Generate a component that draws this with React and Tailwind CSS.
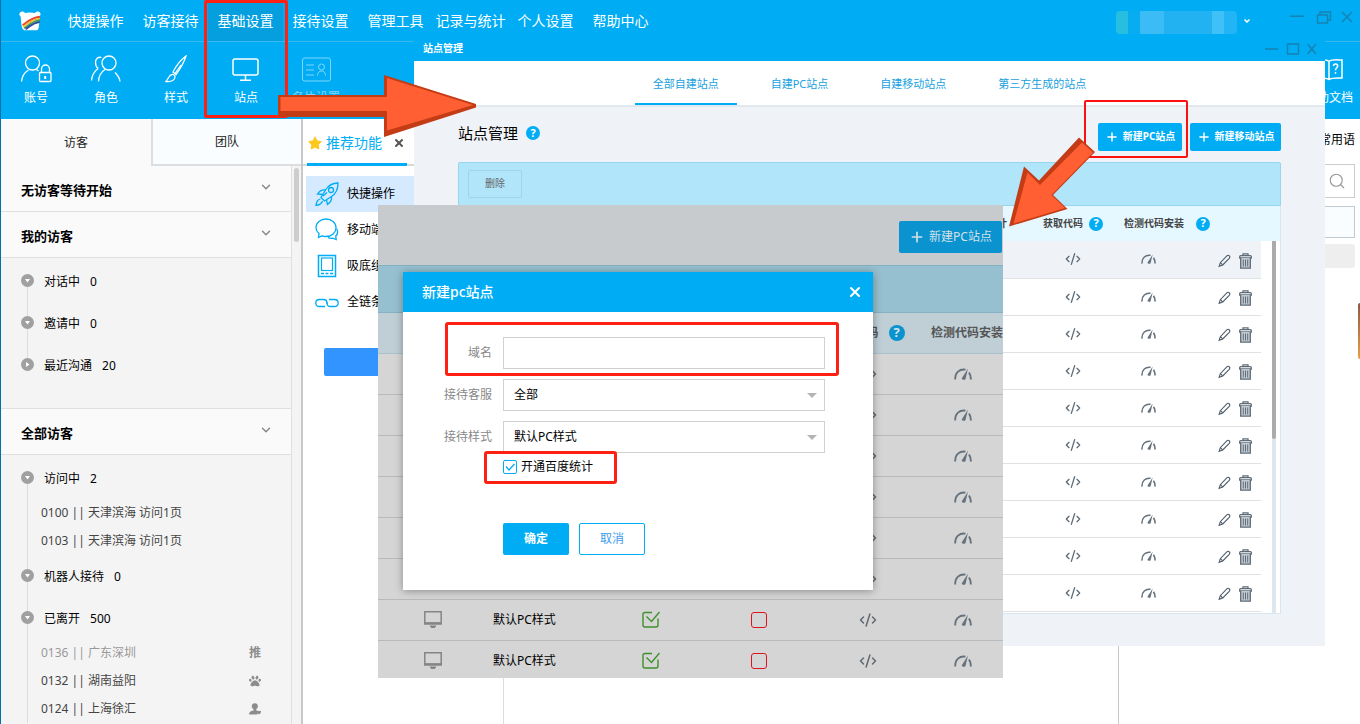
import React, { useState } from "react";
import { CodeXml, Plus, Search, X, ChevronDown } from "lucide-react";
import { FaPaw, FaStar } from "react-icons/fa";

const navItems = [
  "快捷操作",
  "访客接待",
  "基础设置",
  "接待设置",
  "管理工具",
  "记录与统计",
  "个人设置",
  "帮助中心",
];

const siteTabs = ["全部自建站点", "自建PC站点", "自建移动站点", "第三方生成的站点"];

const myGroups = [
  { name: "对话中", count: 0, open: true },
  { name: "邀请中", count: 0, open: true },
  { name: "最近沟通", count: 20, open: false },
];

const allGroups = [
  {
    name: "访问中",
    count: 2,
    open: true,
    visitors: [
      { label: "0100 || 天津滨海 访问1页" },
      { label: "0103 || 天津滨海 访问1页" },
    ],
  },
  { name: "机器人接待", count: 0, open: true },
  {
    name: "已离开",
    count: 500,
    open: true,
    visitors: [
      { label: "0136 || 广东深圳", muted: true, mark: "push" },
      { label: "0132 || 湖南益阳", mark: "baidu" },
      { label: "0124 || 上海徐汇", mark: "user" },
    ],
  },
];

const siteStyles = ["", "", "", "", "", "", "默认PC样式", "默认PC样式"];

// ---------- Icons ----------

const Logo = () => (
  <svg className="w-[22px] h-5" viewBox="0 0 22 20" aria-hidden="true">
    <path
      d="M1 1.500C2.500 0 5 .3 6 2c3-.8 7-.8 10 0 1-1.700 3.500-2 5-.5.9 1.200.6 2.800-.4 3.700.3 3-.4 7-.6 9.300-.2 2.500-.8 4.500-2 4.800H5.500c-1.800-.8-2.800-3-3-5.300C2.200 11 1.800 8 1.700 5.600.2 4.800 0 2.800 1 1.500z"
      fill="#fff"
    />
    <path d="M3.500 14C7.500 12.500 9 7.500 21 5.800" stroke="#e8442c" strokeWidth="2" fill="none" />
    <path d="M4 15.500C8 14 9.500 9.500 21 7.500" stroke="#f6b51f" strokeWidth="1.500" fill="none" />
    <path d="M5 17C9 15.500 10.500 11 21 9" stroke="#3f9f4a" strokeWidth="1.500" fill="none" />
    <path d="M6.500 18C10 16.500 11.500 12.500 20.800 10.700" stroke="#2c4fa8" strokeWidth="2" fill="none" />
  </svg>
);

const AccountIcon = () => (
  <svg className="w-8 h-7" viewBox="0 0 32 28" fill="none" stroke="#fff" strokeWidth="1.300">
    <circle cx="12.500" cy="8" r="7" />
    <path d="M1.500 26.500c.5-5 3-9 7-11.500M16.500 14.500l2 1.500" />
    <path d="M21.500 17v-3a4 4 0 0 1 8 0v3" />
    <rect x="19.500" y="17.500" width="11.500" height="9" rx="1" />
    <path d="M25.200 21v3" strokeWidth="2" />
  </svg>
);

const RoleIcon = () => (
  <svg className="w-8 h-7" viewBox="0 0 32 28" fill="none" stroke="#fff" strokeWidth="1.300">
    <circle cx="19" cy="8" r="7" />
    <path d="M8.500 26.500c.3-5 2.500-9.500 6.500-12M25 17.500c2.500 2.500 4.700 5.500 5 9" />
    <path d="M11.500 2.500C8 1.500 5.500 4 5.500 7.500c0 2.700 1 4.600 2.700 6M8.200 13.500C4.500 16 2 20 1.500 25.500" />
  </svg>
);

const BrushIcon = () => (
  <svg className="w-8 h-7" viewBox="0 0 32 28" fill="none" stroke="#fff" strokeWidth="1.300">
    <path d="M26 1C22 4 16 11 13 17l3 2.500C20 14 24.500 6 26 1zM13 17l3 2.500" />
    <path d="M12 19.500c-3 .3-3 3.500-6 7 4 .3 8.500 0 9-4.500.2-1.500-1.500-2.700-3-2.500z" />
    <path d="M15 18.500 21 10" />
  </svg>
);

const ScreenIcon = () => (
  <svg className="w-8 h-7" viewBox="0 0 32 28" fill="none" stroke="#fff" strokeWidth="1.500">
    <rect x="3" y="4" width="25" height="16" rx="2" />
    <path d="M15.500 20v5M10 25.200h11" />
  </svg>
);

const CardIcon = () => (
  <svg className="w-8 h-7" viewBox="0 0 32 28" fill="none" stroke="#fff" strokeWidth="1">
    <rect x="2.500" y="3" width="28" height="23" rx="2" />
    <path d="M6 10h8M6 15h8M6 20h8" />
    <circle cx="21.500" cy="12" r="3" />
    <path d="M17.500 20.500c0-6 8-6 8 0" />
  </svg>
);

const DocIcon = () => (
  <svg className="w-8 h-7" viewBox="0 0 32 28" fill="none" stroke="#fff" strokeWidth="1.500">
    <path d="M16 6.500C13 4 8 5 3 5v18c5 0 10-.5 13 1.500 3-2 8-1.500 13-1.500V5c-5 0-10-1-13 1.500zM16 6v18M6 9h6M6 14h6M6 19h6" />
    <path d="M20.500 11c0-3 4.500-2.500 4.200.2-.2 1.500-2.200 1.800-2.200 4M22.500 17v1.800" />
  </svg>
);

const RocketIcon = () => (
  <svg className="w-6 h-6" viewBox="0 0 24 24" fill="none" stroke="#00adf5" strokeWidth="1.300">
    <path d="M23 1c-6 0-10 3-12.500 7L6 15.500 9.500 19l7-4.500C20.500 12 23 7 23 1z" />
    <path d="M10.500 8C7 7.500 4.500 9 2.500 12l5 .5M16.500 14.500c.5 3.500-1 6-4 8l-1-4.500" />
    <circle cx="16" cy="8" r="2.500" />
    <path d="M5.500 17C2 18 1.500 20 1 23.500 4.500 23 6.500 22 7.500 19M8 14l4-3.500" />
  </svg>
);

const ChatIcon = () => (
  <svg className="w-6 h-6" viewBox="0 0 24 24" fill="none" stroke="#00adf5" strokeWidth="1.300">
    <path d="M11 1c5.500 0 10 3.800 10 8.800 0 4.800-4 8.700-10 8.700-1.500 0-3-.3-4-.7L3.500 19.500 4 15.500C2.200 14 1 12 1 9.800 1 4.800 5.500 1 11 1z" />
    <path d="M21.500 10.500c1.500 2.500 1.500 5.500-.8 7.500l.5 3.500-3.500-1.300c-1.700.3-3.200.2-4.700-.5" />
  </svg>
);

const PhoneIcon = () => (
  <svg className="w-6 h-6" viewBox="0 0 24 24" fill="none" stroke="#00adf5" strokeWidth="1.500">
    <rect x="3.500" y="1.500" width="17" height="21" />
    <rect x="6.500" y="4" width="11" height="12.500" strokeWidth="1.200" />
    <path d="M6 19.500h3M10.500 19.500h3M15 19.500h3" />
  </svg>
);

const LinkIcon = () => (
  <svg className="w-6 h-6" viewBox="0 0 24 24" fill="none" stroke="#00adf5" strokeWidth="1.300">
    <path d="M10 16.500H4.500C2 16.500.8 15.500.8 13S2 9.500 4.500 9.500h4c3 0 3.500 1.500 3.500 3.500v1" />
    <path d="M14 9.500h5.500c2.500 0 3.700 1 3.700 3.500s-1.200 3.500-3.700 3.500h-4c-3 0-3.500-1.500-3.500-3.500v-1" />
  </svg>
);

const GaugeIcon = ({ large }) => (
  <svg
    className={large ? "w-[18px] h-3" : "w-[15px] h-[10px]"}
    viewBox="0 0 18 12"
    fill="none"
    stroke="#66727d"
    strokeWidth="1.800"
  >
    <path d="M1.200 11.500C.8 4.500 5.500.8 11.500 1.600" />
    <path d="M15 4.500c1.300 1.800 1.900 4 1.900 7" strokeWidth="2" />
    <path d="M14 .5 11.500 11c-.5 1.200-3.300 1.200-3.800-.5z" fill="#66727d" stroke="none" />
  </svg>
);

const PencilIcon = () => (
  <svg className="w-[13px] h-[14px]" viewBox="0 0 14 14" fill="none" stroke="#4f5c69" strokeWidth="1.200">
    <path d="M1.200 12.800 2.500 8.800 9.500 1.500c.9-.9 2-.8 2.700 0s.7 1.700-.1 2.600l-7 7.200z" />
    <path d="M2.500 8.800 5 11.200" />
  </svg>
);

const TrashIcon = () => (
  <svg className="w-[13px] h-4" viewBox="0 0 13 16" fill="none" stroke="#5f6c78" strokeWidth="1.300">
    <path d="M4 2.500V.8h5v1.700M.7 5V3.600c0-.6.5-1 1-1h9.600c.5 0 1 .4 1 1V5z" />
    <path d="M1.700 5v10.200h9.600V5" fill="#c3cbd2" />
    <path d="M4.300 6.500v7M6.500 6.500v7M8.700 6.500v7" strokeWidth="1" />
  </svg>
);

const MonitorIcon = () => (
  <svg className="w-[18px] h-[17px]" viewBox="0 0 18 17" fill="none" stroke="#858585">
    <path d="M.8.8h16.400v11.500H.8z" strokeWidth="1.500" />
    <path d="M0 12.500h18" strokeWidth="2.500" />
    <path d="M6 14.500h6v1.500H11v1H7v-1H6z" fill="#858585" stroke="none" />
  </svg>
);

const GreenCheck = () => (
  <svg className="w-[18px] h-[18px]" viewBox="0 0 18 18" fill="none" stroke="#3f8f2c" strokeWidth="1.400">
    <path d="M10 1.500H3c-1.500 0-2 .5-2 2V14c0 1.300.5 2 2 2h11c1.300 0 2-.7 2-2V7.500" />
    <path d="m4.500 5.500 5 5L17.500 1" />
  </svg>
);

const UserMark = () => (
  <svg className="w-3 h-3" viewBox="0 0 12 12" fill="#8c8c8c">
    <circle cx="5.800" cy="3.300" r="3" />
    <path d="M4.500 5h2.800v2.500c1.500.3 2 .8 2.200 1.500L8 11.500H0C0 9 1.500 8 4.500 7.500z" />
    <path d="M12 8.700c0 1.300-1.300 2.300-2 2.800-.7-.5-2-1.500-2-2.800 0-1 1.400-1.400 2-.3.600-1.100 2-.7 2 .3z" />
  </svg>
);

const Help = ({ large, dim }) => (
  <span
    className={`inline-flex items-center justify-center rounded-full font-bold ${
      large ? "w-4 h-4 text-[13px]" : "w-[14px] h-[14px] text-[11px]"
    } ${dim ? "bg-[#0b93d0] text-[#d5e4ea]" : "bg-[#00adf5] text-white"}`}
  >
    ?
  </span>
);

const markIcons = {
  push: <span className="text-xs font-bold text-[#8c8c8c]">推</span>,
  baidu: <FaPaw className="w-3 h-3 text-[#8c8c8c]" />,
  user: <UserMark />,
};

// ---------- Left column ----------

function SectionTitle({ children }) {
  return (
    <button className="flex w-full items-center justify-between h-[46px] pl-5 pr-[18px] bg-[#fafafa] border-b border-[#e0e0e0] text-[13px] font-bold text-black">
      <span className="pt-1">{children}</span>
      <ChevronDown className="w-[14px] h-[14px] mb-1 text-[#888]" strokeWidth={2.5} />
    </button>
  );
}

function Group({ group }) {
  return (
    <li>
      <div className="flex items-center h-10 pl-5">
        <svg className="w-[13px] h-[13px] mr-[10px] mb-1 shrink-0" viewBox="0 0 13 13">
          <circle cx="6.500" cy="6.500" r="6.500" fill="#a0a0a0" />
          {group.open ? (
            <path d="M4 5h5L6.500 8.500z" fill="#fff" />
          ) : (
            <path d="M5 4v5l3.500-2.500z" fill="#fff" />
          )}
        </svg>
        <span className="text-black">{group.name}</span>
        <span className="ml-[10px] text-black">{group.count}</span>
      </div>
      {group.visitors && (
        <ul>
          {group.visitors.map((visitor) => (
            <li
              key={visitor.label}
              className={`flex items-center justify-between h-7 pl-10 ${
                visitor.muted ? "text-[#999]" : "text-[#444]"
              }`}
            >
              <span>{visitor.label}</span>
              <span className="flex justify-center w-3 mr-[30px]">{markIcons[visitor.mark]}</span>
            </li>
          ))}
        </ul>
      )}
    </li>
  );
}

function VisitorColumn() {
  return (
    <aside className="flex flex-col w-[302px] shrink-0 bg-[#f5f4f5] border-r-2 border-[#c9c9c9]">
      <div className="grid grid-cols-2 h-[47px] shrink-0">
        <button className="bg-[#fafafa]">访客</button>
        <button className="bg-[#f9fdff] border-l-2 border-b-2 border-[#dcdfe2]">团队</button>
      </div>
      <div className="flex flex-1 min-h-0">
        <div className="flex-1 overflow-hidden border-r border-[#e0e0e0]">
          <SectionTitle>无访客等待开始</SectionTitle>
          <SectionTitle>我的访客</SectionTitle>
          <div className="relative h-[151px] pt-1 border-b border-[#e0e0e0]">
            <span className="absolute left-[26px] top-6 h-[84px] w-px bg-[#dcdcdc]"></span>
            <ul className="relative flex flex-col gap-[2px]">
              {myGroups.map((group) => (
                <Group key={group.name} group={group} />
              ))}
            </ul>
          </div>
          <SectionTitle>全部访客</SectionTitle>
          <div className="relative pt-1">
            <span className="absolute left-[26px] top-6 bottom-0 w-px bg-[#dcdcdc]"></span>
            <ul className="relative flex flex-col gap-[2px]">
              {allGroups.map((group) => (
                <Group key={group.name} group={group} />
              ))}
            </ul>
          </div>
        </div>
        <div className="w-[9px] pl-[2px] pt-[2px]">
          <div className="w-[5px] h-[74px] rounded-full bg-[#cdcdcd]"></div>
        </div>
      </div>
    </aside>
  );
}

function FeatureColumn() {
  const features = [
    { name: "快捷操作", icon: <RocketIcon />, active: true },
    { name: "移动端", icon: <ChatIcon /> },
    { name: "吸底组", icon: <PhoneIcon /> },
    { name: "全链条", icon: <LinkIcon /> },
  ];

  return (
    <section className="w-[201px] shrink-0 border-r border-[#dcdcdc]">
      <div className="flex h-[47px] pl-1 border-b-2 border-[#d8d8d8]">
        <div className="flex items-center gap-1 h-[47px] w-[100px] pt-1 pl-px border-b-[3px] border-[#00adf5]">
          <FaStar className="w-[14px] h-[14px] text-[#fdc81e]" />
          <span className="text-sm text-[#00adf5]">推荐功能</span>
          <X className="w-3 h-3 ml-[7px] text-[#555]" strokeWidth={4} />
        </div>
      </div>
      <ul className="mt-[10px] ml-[3px]">
        {features.map((item) => (
          <li
            key={item.name}
            className={`flex items-center gap-2 h-9 pl-[9px] text-black ${item.active ? "bg-[#d5e9ff]" : ""}`}
          >
            {item.icon}
            <span>{item.name}</span>
          </li>
        ))}
      </ul>
      <div className="mt-7 ml-[21px] h-7 rounded-[2px] bg-[#3194ff]"></div>
    </section>
  );
}

function PhraseColumn() {
  return (
    <section className="w-[242px] shrink-0 pr-[5px] border-l border-[#c9c9c9]">
      <div className="flex items-center justify-end h-[45px] pb-1 text-black">常用语</div>
      <div className="flex items-center justify-end h-[34px] pr-2 border border-[#ccc]">
        <Search className="w-[18px] h-[18px] text-[#999]" strokeWidth={1.5} />
      </div>
      <input
        aria-label="常用语"
        className="block w-full h-8 mt-2 border border-[#bfcad2] bg-[#f9fdff]"
      />
      <div className="h-6 mt-[6px] rounded-[3px] bg-[#eee]"></div>
    </section>
  );
}

// ---------- Header ----------

function Tool({ label, icon, faded }) {
  return (
    <button
      className={`flex flex-col items-center w-[70px] pt-[13px] text-xs text-white ${faded ? "opacity-50" : ""}`}
    >
      {icon}
      <span className="mt-[6px] h-[18px] leading-[18px]">{label}</span>
    </button>
  );
}

function Header() {
  return (
    <header className="bg-[#00adf5] text-white">
      <div className="flex items-center h-[42px] border-b border-[#38b9ee]">
        <div className="flex justify-center w-[57px]">
          <Logo />
        </div>
        <nav className="flex flex-1 h-full text-sm">
          {navItems.map((item) => (
            <a
              key={item}
              href="#"
              className={`flex items-center justify-center w-[75px] h-full whitespace-nowrap ${
                item === "基础设置" ? "bg-[#059edf]" : ""
              }`}
            >
              {item}
            </a>
          ))}
        </nav>
        <div className="flex h-[23px] w-[121px] mt-[3px] rounded overflow-hidden">
          <span className="w-3 bg-[#27bfe0]"></span>
          <span className="w-3 bg-[#08acf0]"></span>
          <span className="w-6 bg-[#3bbcf5]"></span>
          <span className="w-12 bg-[#22b2f2]"></span>
          <span className="w-3 bg-[#3fc0f6]"></span>
          <span className="flex-1 bg-[#22b4f4]"></span>
        </div>
        <ChevronDown className="w-2 h-2 ml-[6px] mr-[39px]" strokeWidth={5} />
        <div className="mr-[6px] -mt-2">
          <svg className="w-16 h-4" viewBox="0 0 64 16" fill="none" stroke="#1583b3" strokeWidth="1.500">
            <path d="M0 7.200h14M52 3l10 10M62 3 52 13" />
            <path d="M27.500 6h10v8h-10zM30 6V3h10.500v8H38" />
          </svg>
        </div>
      </div>
      <div className="flex justify-between h-[77px]">
        <div className="flex">
          <Tool label="账号" icon={<AccountIcon />} />
          <Tool label="角色" icon={<RoleIcon />} />
          <Tool label="样式" icon={<BrushIcon />} />
          <Tool label="站点" icon={<ScreenIcon />} />
          <Tool label="名片设置" icon={<CardIcon />} faded />
        </div>
        <div className="-mr-1">
          <Tool label="帮助文档" icon={<DocIcon />} />
        </div>
      </div>
    </header>
  );
}

// ---------- Windows ----------

function SiteWindow() {
  const [tab, setTab] = useState(siteTabs[0]);
  const cell = "p-0 border-b border-[#dfe1e3]";

  return (
    <section className="absolute left-[414px] top-[41px] w-[911px] h-[605px] bg-[#eff3f7]">
      <div className="flex items-center justify-between h-5 pl-[9px] pr-2 pb-1 bg-[#00adf5]">
        <h2 className="text-[10px] font-bold text-white">站点管理</h2>
        <svg className="w-[52px] h-3" viewBox="0 0 52 12" fill="none" stroke="#1583b3" strokeWidth="1.500">
          <path d="M0 6h13M22.500 1h11v10h-11zM42.500 1l8.500 10M51 1l-8.500 10" />
        </svg>
      </div>
      <div className="flex justify-center gap-4 h-[46px] bg-white border-b-2 border-[#e1e8ee]">
        {siteTabs.map((item) => (
          <button
            key={item}
            onClick={() => setTab(item)}
            className={`h-[44px] pt-1 px-[18px] text-[11px] text-[#189fe0] border-b-2 ${
              tab === item ? "border-[#00adf5]" : "border-transparent"
            }`}
          >
            {item}
          </button>
        ))}
      </div>
      <div className="px-11 pt-4">
        <div className="flex items-start h-7">
          <div className="flex items-center h-5 gap-2">
            <h1 className="text-[15px] text-black">站点管理</h1>
            <Help />
          </div>
          <button className="flex items-center justify-center gap-1 w-[84px] h-7 ml-auto rounded-[2px] bg-[#00adf5] text-[10px] font-bold text-white">
            <Plus className="w-[14px] h-[14px]" strokeWidth={2.5} />
            新建PC站点
          </button>
          <button className="flex items-center justify-center gap-1 w-[91px] h-7 ml-2 rounded-[2px] bg-[#00adf5] text-[10px] font-bold text-white">
            <Plus className="w-[14px] h-[14px]" strokeWidth={2.5} />
            新建移动站点
          </button>
        </div>
        <div className="flex items-center h-11 mt-[11px] pl-[9px] rounded-t-[2px] bg-[#b1e5fa] border border-[#98d5ee]">
          <button className="w-[54px] h-7 rounded-[2px] border border-[#a2d3e6] text-[10px] text-[#666]">删除</button>
        </div>
        <div className="relative h-[408px] overflow-hidden bg-white border-b border-r border-[#d8e6ee]">
          <table className="w-full table-fixed">
            <thead>
              <tr className="h-[35px] bg-[#e5f7ff] text-[10px] text-[#444]">
                <th className="pr-7 text-right">百度统计</th>
                <th className="w-[76px] p-0">
                  <span className="flex items-center justify-center gap-[6px]">
                    获取代码
                    <Help />
                  </span>
                </th>
                <th className="w-[104px] p-0 pl-[13px]">
                  <span className="flex items-center gap-3">
                    检测代码安装
                    <Help />
                  </span>
                </th>
                <th className="w-[46px]"></th>
                <th className="w-[19px]"></th>
              </tr>
            </thead>
            <tbody>
              {Array.from({ length: 10 }, (_, i) => (
                <tr key={i} className="h-[37px]">
                  <td className={`${cell} ${i === 0 ? "bg-[#eff3f7]" : ""}`}></td>
                  <td className={`${cell} ${i === 0 ? "bg-[#eff3f7]" : ""}`}>
                    <CodeXml className="mx-auto w-4 h-4 text-[#5f6c78]" strokeWidth={2} />
                  </td>
                  <td className={`${cell} ${i === 0 ? "bg-[#eff3f7]" : ""}`}>
                    <span className="flex pl-[30px]">
                      <GaugeIcon />
                    </span>
                  </td>
                  <td className={`${cell} ${i === 0 ? "bg-[#eff3f7]" : ""}`}>
                    <span className="flex items-center gap-2 pl-[3px] pt-[3px]">
                      <PencilIcon />
                      <TrashIcon />
                    </span>
                  </td>
                  <td></td>
                </tr>
              ))}
            </tbody>
          </table>
          <div className="absolute right-1 top-[35px] bottom-0 w-1 bg-[#dfe7ee]">
            <div className="h-[198px] rounded-b-full bg-[#ababab]"></div>
          </div>
        </div>
      </div>
    </section>
  );
}

function NewSiteDialog() {
  const [domain, setDomain] = useState("");
  const [stats, setStats] = useState(true);
  const field = "w-[322px] h-8 px-[10px] border border-[#d0d0d0] bg-white text-xs text-black";

  return (
    <form className="absolute left-[25px] top-[67px] w-[470px] bg-white shadow-[0_1px_8px_rgba(0,0,0,0.35)]">
      <div className="flex items-center justify-between h-10 pl-[19px] pr-[10px] bg-[#00adf5] text-white">
        <h2 className="text-sm font-medium">新建pc站点</h2>
        <button type="button" aria-label="关闭">
          <X className="w-4 h-4" strokeWidth={3} />
        </button>
      </div>
      <div className="flex flex-col gap-[10px] pt-[25px] text-[#888]">
        <div className="flex items-center gap-[11px]">
          <label htmlFor="domain" className="w-[89px] text-right">域名</label>
          <input
            id="domain"
            value={domain}
            onChange={(event) => setDomain(event.target.value)}
            className={field}
          />
        </div>
        <div className="flex items-center gap-[11px]">
          <label htmlFor="agent" className="w-[89px] text-right">接待客服</label>
          <div className="relative">
            <select id="agent" className={`appearance-none ${field}`}>
              <option>全部</option>
            </select>
            <span className="absolute right-2 top-[14px] border-x-[5px] border-t-[5px] border-x-transparent border-t-[#b5b5b5]"></span>
          </div>
        </div>
        <div className="flex items-center gap-[11px]">
          <label htmlFor="style" className="w-[89px] text-right">接待样式</label>
          <div className="relative">
            <select id="style" className={`appearance-none ${field}`}>
              <option>默认PC样式</option>
            </select>
            <span className="absolute right-2 top-[14px] border-x-[5px] border-t-[5px] border-x-transparent border-t-[#b5b5b5]"></span>
          </div>
        </div>
      </div>
      <label className="relative flex items-center gap-1 h-[18px] mt-[5px] ml-[100px] text-black">
        <input
          type="checkbox"
          checked={stats}
          onChange={(event) => setStats(event.target.checked)}
          className="appearance-none w-[14px] h-[14px] rounded-[2px] border border-[#00adf5]"
        />
        {stats && (
          <svg
            className="absolute left-0 top-[2px] w-[14px] h-[14px] pointer-events-none"
            viewBox="0 0 14 14"
            fill="none"
            stroke="#00adf5"
            strokeWidth="1.300"
          >
            <path d="m3 6.500 3 3.500 5.500-6" />
          </svg>
        )}
        开通百度统计
      </label>
      <div className="flex gap-[10px] mt-[47px] ml-[100px] pb-[35px]">
        <button type="button" className="w-[66px] h-8 rounded-[2px] bg-[#00adf5] font-bold text-white">
          确定
        </button>
        <button type="button" className="w-[66px] h-8 rounded-[2px] border border-[#00adf5] text-[#3b9be8]">
          取消
        </button>
      </div>
      {/* Highlights on the domain field and the statistics option */}
      <div className="absolute left-[42px] top-[50px] w-[394px] h-[54px] rounded-[3px] border-[3px] border-[#ff2014] pointer-events-none"></div>
      <div className="absolute left-[81px] top-[179px] w-[133px] h-[33px] rounded-[3px] border-[3px] border-[#ff2014] pointer-events-none"></div>
    </form>
  );
}

function NewSiteWindow() {
  return (
    <section className="absolute left-[378px] top-[205px] w-[625px] h-[473px] overflow-hidden bg-[#d5d5d5]">
      <div className="flex justify-end items-center h-[60px] pt-1 pr-px bg-[#c8cbce]">
        <button className="flex items-center justify-center gap-1 w-[103px] h-8 rounded-[2px] bg-[#0b93d0] text-[#d3e0e6]">
          <Plus className="w-4 h-4" strokeWidth={2.5} />
          新建PC站点
        </button>
      </div>
      <div className="h-12 bg-[#96bfcf] border-y border-[#83b2c4]"></div>
      <table className="w-full table-fixed">
        <thead>
          <tr className="h-10 bg-[#bfcfd5] text-xs text-[#555] border-b border-[#a8c2cc]">
            <th className="w-[110px]"></th>
            <th className="w-[109px]"></th>
            <th className="w-[108px]"></th>
            <th className="w-[108px]"></th>
            <th className="w-[109px] p-0">
              <span className="flex items-center justify-center gap-[10px]">
                获取代码
                <Help large dim />
              </span>
            </th>
            <th className="p-0 pl-[9px] text-left whitespace-nowrap">检测代码安装</th>
          </tr>
        </thead>
        <tbody>
          {siteStyles.map((style, i) => (
            <tr key={i} className="h-[41px] border-b border-[#b7babc]">
              <td className="p-0">
                <span className="flex justify-center">
                  <MonitorIcon />
                </span>
              </td>
              <td className="p-0 pl-[5px] text-black">{style}</td>
              <td className="p-0">
                <span className="flex justify-center">
                  <GreenCheck />
                </span>
              </td>
              <td className="p-0">
                <div className="mx-auto w-4 h-4 rounded-[3px] border border-[#dc1420]"></div>
              </td>
              <td className="p-0">
                <CodeXml className="mx-auto w-[18px] h-[18px] text-[#606a72]" strokeWidth={2} />
              </td>
              <td className="p-0">
                <span className="flex justify-center">
                  <GaugeIcon large />
                </span>
              </td>
            </tr>
          ))}
        </tbody>
      </table>
      <NewSiteDialog />
    </section>
  );
}

// ---------- Guide marks drawn over the windows ----------

function GuideMarks() {
  return (
    <div className="pointer-events-none">
      <div className="absolute left-[204px] top-0 w-[84px] h-[118px] rounded-[2px] border-[3px] border-[#ff2014]"></div>
      <div className="absolute left-[1084px] top-[100px] w-[104px] h-[58px] rounded-[2px] border-2 border-[#ff1010]"></div>
      <svg className="absolute left-[278px] top-[74px] w-[200px] h-[64px]" viewBox="278 74 200 64">
        <path d="M278 95H384V75L476 104v3.500L384 137V117H278z" fill="#c43c15" />
        <path d="M280.500 97H387V78L473 105 387 130.500V111H280.500z" fill="#ff5f33" />
      </svg>
      <svg className="absolute left-[1008px] top-[136px] w-[90px] h-[92px]" viewBox="1008 136 90 92">
        <path d="M1079 137.500 1095 152 1053 195 1067.500 209 1009 226.500 1024 166.500 1039 180.500z" fill="#c43c15" />
        <path d="M1082 142.500 1093 152.500 1051.500 195 1065 208 1013.500 223.500 1027.500 172.500 1040 185z" fill="#ff5f33" />
      </svg>
    </div>
  );
}

function App() {
  return (
    <div className="relative flex flex-col h-screen overflow-hidden bg-white text-xs text-[#222] font-[family-name:'Noto_Sans','Noto_Sans_CJK_SC',sans-serif]">
      <div className="flex flex-col flex-1 min-h-0 border-l border-[#0072aa]">
        <Header />
        <main className="flex flex-1 min-h-0">
          <VisitorColumn />
          <FeatureColumn />
          <div className="flex-1"></div>
          <PhraseColumn />
        </main>
      </div>
      <div className="absolute right-0 top-[303px] w-[2px] h-[56px] rounded-l bg-linear-to-b from-[#8a5a44] to-[#e8a040]"></div>
      <SiteWindow />
      <NewSiteWindow />
      <GuideMarks />
    </div>
  );
}

export default App;
